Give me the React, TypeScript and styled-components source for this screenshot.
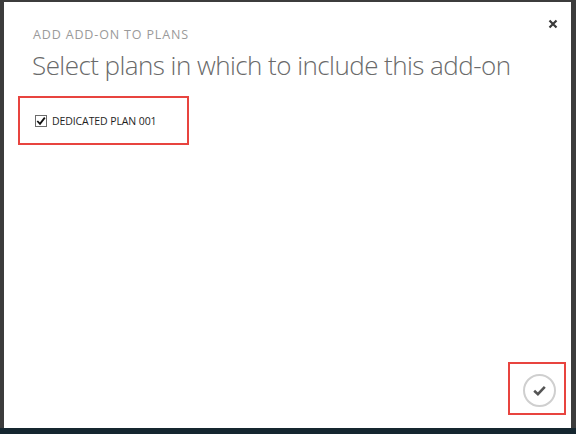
import styled, { createGlobalStyle } from 'styled-components';

const GlobalStyle = createGlobalStyle`
  html, body {
    margin: 0;
    padding: 0;
    background: #3c3c3c;
  }
  * {
    box-sizing: border-box;
  }
`;

const Page = styled.div`
  width: 576px;
  height: 434px;
  display: flex;
  flex-direction: column;
  background: #3c3c3c;
  overflow: hidden;
`;

const Dialog = styled.div`
  position: relative;
  margin: 2px 5px 0 4px;
  height: 426px;
  background: #ffffff;
  display: flex;
  flex-direction: column;
  padding: 24px 5px 13px 14px;
  font-family: 'Open Sans', 'Liberation Sans', sans-serif;
`;

const BottomStrip = styled.div`
  flex: 1;
  background: #15262f;
`;

const CloseButton = styled.button`
  position: absolute;
  top: 14px;
  right: 10px;
  width: 16px;
  height: 16px;
  padding: 0;
  border: none;
  background: none;
  display: flex;
  align-items: center;
  justify-content: center;
  cursor: pointer;
`;

const Eyebrow = styled.div`
  margin-left: 15px;
  font-size: 12.5px;
  letter-spacing: 0.85px;
  color: #9a9a9a;
  text-transform: uppercase;
`;

const Title = styled.h1`
  margin: 5px 0 0 14px;
  font-size: 26px;
  font-weight: 300;
  color: #6a6a6a;
  letter-spacing: -0.55px;
  line-height: 34px;
`;

const Highlight = styled.div`
  border: 2px solid #e8443f;
`;

const PlanBox = styled(Highlight)`
  margin-top: 14px;
  width: 171px;
  height: 49px;
  display: flex;
  align-items: center;
  padding-left: 15px;
  gap: 5px;
`;

const Check = styled.span`
  width: 12px;
  height: 12px;
  border: 1px solid #6b6b6b;
  background: #fff;
  display: flex;
  align-items: center;
  justify-content: center;
`;

const PlanLabel = styled.span`
  font-size: 10.5px;
  font-weight: 400;
  color: #1e1e1e;
  letter-spacing: -0.1px;
`;

const Footer = styled.div`
  margin-top: auto;
  display: flex;
  justify-content: flex-end;
`;

const ConfirmBox = styled(Highlight)`
  width: 58px;
  height: 53px;
  display: flex;
  align-items: center;
  justify-content: center;
  padding: 3px 0 0 5px;
`;

const ConfirmButton = styled.button`
  width: 33px;
  height: 33px;
  border-radius: 50%;
  border: 2px solid #cfcfcf;
  background: #fff;
  padding: 0;
  display: flex;
  align-items: center;
  justify-content: center;
  cursor: pointer;
`;

const App = () => {
  return (
    <>
      <GlobalStyle />
      <Page>
        <Dialog>
          <CloseButton aria-label="Close">
            <svg width="10" height="10" viewBox="0 0 10 10">
              <path d="M1.5 1.5 L8.5 8.5 M8.5 1.5 L1.5 8.5" stroke="#3a3a3a" strokeWidth="2.2" />
            </svg>
          </CloseButton>
          <Eyebrow>Add add-on to plans</Eyebrow>
          <Title>Select plans in which to include this add-on</Title>
          <PlanBox>
            <Check>
              <svg width="10" height="10" viewBox="0 0 10 10">
                <path d="M1.3 5 L4 7.8 L8.8 1.6" fill="none" stroke="#111" strokeWidth="1.8" />
              </svg>
            </Check>
            <PlanLabel>DEDICATED PLAN 001</PlanLabel>
          </PlanBox>
          <Footer>
            <ConfirmBox>
              <ConfirmButton aria-label="Confirm">
                <svg width="17" height="17" viewBox="0 0 16 16">
                  <path d="M3 8.2 L6.5 11.5 L13 4.5" fill="none" stroke="#555" strokeWidth="2.4" />
                </svg>
              </ConfirmButton>
            </ConfirmBox>
          </Footer>
        </Dialog>
        <BottomStrip />
      </Page>
    </>
  );
};

export default App;
